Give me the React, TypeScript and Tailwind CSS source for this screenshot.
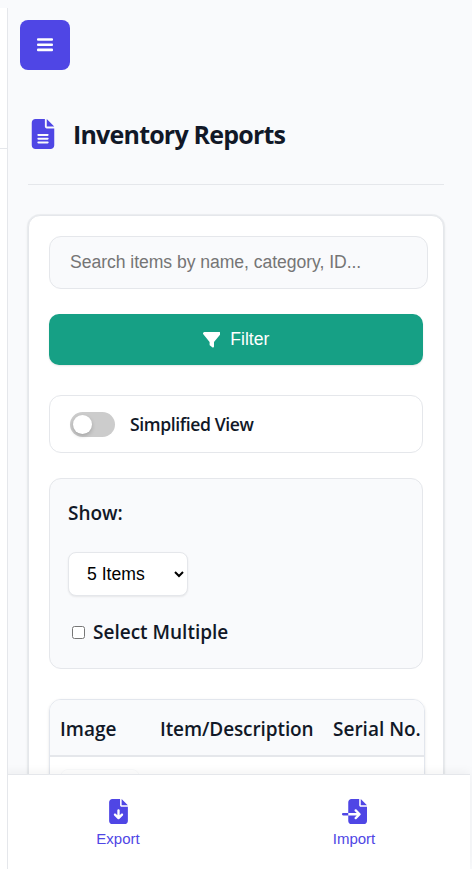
import { useState } from "react";
import { FaFileArrowDown, FaFileImport, FaFileLines, FaFilter } from "react-icons/fa6";

const ui = "font-['Open_Sans','Noto_Sans',sans-serif]";
const arial = "font-['Liberation_Sans',Arial,sans-serif]";

export default function App() {
  const [simplified, setSimplified] = useState(false);
  return (
    <div className={`relative flex h-[869px] w-[472px] overflow-hidden bg-[#f9fafc] text-[#111827] ${ui}`}>
      <aside className="relative z-20 mt-2 w-2 shrink-0 border-r border-[#e5e7eb] bg-white">
        <div className="h-[141px] border-b border-[#e5e7eb]" />
      </aside>

      <main className="flex min-w-0 flex-1 flex-col pl-5 pr-7">
        <button aria-label="Menu" className="-ml-2 mt-5 flex h-[50px] w-[50px] shrink-0 items-center justify-center rounded-lg bg-[#4f46e5] text-white">
          <svg viewBox="0 0 16 14" className="h-[14px] w-4" fill="currentColor">
            <rect y="0.2" width="16" height="2.6" rx="1" />
            <rect y="5.4" width="16" height="2.6" rx="1" />
            <rect y="10.6" width="16" height="2.6" rx="1" />
          </svg>
        </button>

        <header className="mt-[30px] flex h-[85px] shrink-0 items-start border-b border-[#e5e7eb] pl-[3px] pt-[19px]">
          <FaFileLines className="h-[30px] w-6 shrink-0 text-[#4f46e5]" />
          <h1 className="-mt-px ml-[18px] whitespace-nowrap text-[25px] font-bold leading-[33px] tracking-[-0.8px]">Inventory Reports</h1>
        </header>

        <section className="mt-[30px] h-[700px] shrink-0 rounded-xl border border-[#e5e7eb] bg-white px-5 pt-5 shadow-[0_1px_3px_rgba(0,0,0,0.12)] ring-1 ring-[#e5e7eb]/60">
          <input
            placeholder="Search items by name, category, ID..."
            className={`block h-[53px] w-[379px] rounded-xl border border-[#e5e7eb] bg-[#f9fafc] px-5 text-[17.6px] tracking-[-0.05px] placeholder:text-[#757575] ${arial}`}
          />

          <button className={`mt-[25px] flex h-[51px] w-[374px] items-center justify-center gap-[10px] rounded-[10px] bg-[#16a085] text-[17.6px] text-white shadow-[0_1px_2px_rgba(0,0,0,0.1)] ${arial}`}>
            <FaFilter className="h-[17.6px] w-[17.6px]" />
            <span>Filter</span>
          </button>

          <div className="mt-[30px] flex h-[58px] w-[374px] items-center rounded-xl border border-[#e5e7eb] px-5">
            <button
              aria-label="Toggle simplified view"
              onClick={() => setSimplified(!simplified)}
              className={`flex h-[25px] w-[45px] items-center rounded-full px-[3px] ${simplified ? "justify-end bg-[#4f46e5]" : "bg-[#cccccc]"}`}
            >
              <span className="h-[19px] w-[19px] rounded-full bg-white shadow-[0_2px_4px_rgba(0,0,0,0.2)]" />
            </button>
            <span className="ml-[15px] whitespace-nowrap text-[17.6px] font-semibold tracking-[-0.4px]">Simplified View</span>
          </div>

          <div className="mt-[25px] flex h-[191px] w-[374px] flex-col items-start rounded-xl border border-[#e5e7eb] bg-[#f9fafc] px-[18px] text-[19px] font-semibold">
            <span className="mt-5 leading-7">Show:</span>
            <select className={`mt-[25px] h-11 w-[120px] rounded-lg border border-[#e5e7eb] bg-white pl-[14px] text-[17.6px] font-normal text-black shadow-[0_1px_2px_rgba(0,0,0,0.08)] ${arial}`}>
              <option>5 Items</option>
            </select>
            <label className="mt-[22px] flex items-center leading-7">
              <input type="checkbox" className="ml-1 h-[13px] w-[13px]" />
              <span className="ml-2 whitespace-nowrap">Select Multiple</span>
            </label>
          </div>

          <div className="mt-[30px] h-[160px] w-[376px] overflow-hidden rounded-xl border border-[#e2e6ed] shadow-[0_1px_3px_rgba(0,0,0,0.1)]">
            <div className="flex h-[57px] items-center whitespace-nowrap border-b-2 border-[#e5e7eb] bg-[#f9fafc] pt-[3px] text-[19px] font-semibold">
              <span className="w-[110px] shrink-0 pl-[10px]">Image</span>
              <span className="w-[173px] shrink-0 tracking-[-0.1px]">Item/Description</span>
              <span>Serial No.</span>
            </div>
            <div className="ml-[10px] mt-3 h-20 w-20 rounded-lg border border-[#f9fafb]" />
          </div>
        </section>
      </main>

      <nav className={`absolute bottom-0 left-0 z-10 grid h-[95px] w-[470px] grid-cols-[236px_236px] border-t border-[#e5e7eb] bg-white text-[15px] text-[#4f46e5] shadow-[0_-2px_10px_rgba(0,0,0,0.05)] ${arial}`}>
        <button className="flex flex-col items-center pt-6">
          <FaFileArrowDown className="h-[25px] w-[25px]" />
          <span className="mt-[6px] leading-[18px]">Export</span>
        </button>
        <button className="flex flex-col items-center pt-6">
          <FaFileImport className="h-[25px] w-[25px]" />
          <span className="mt-[6px] leading-[18px]">Import</span>
        </button>
      </nav>
    </div>
  );
}
